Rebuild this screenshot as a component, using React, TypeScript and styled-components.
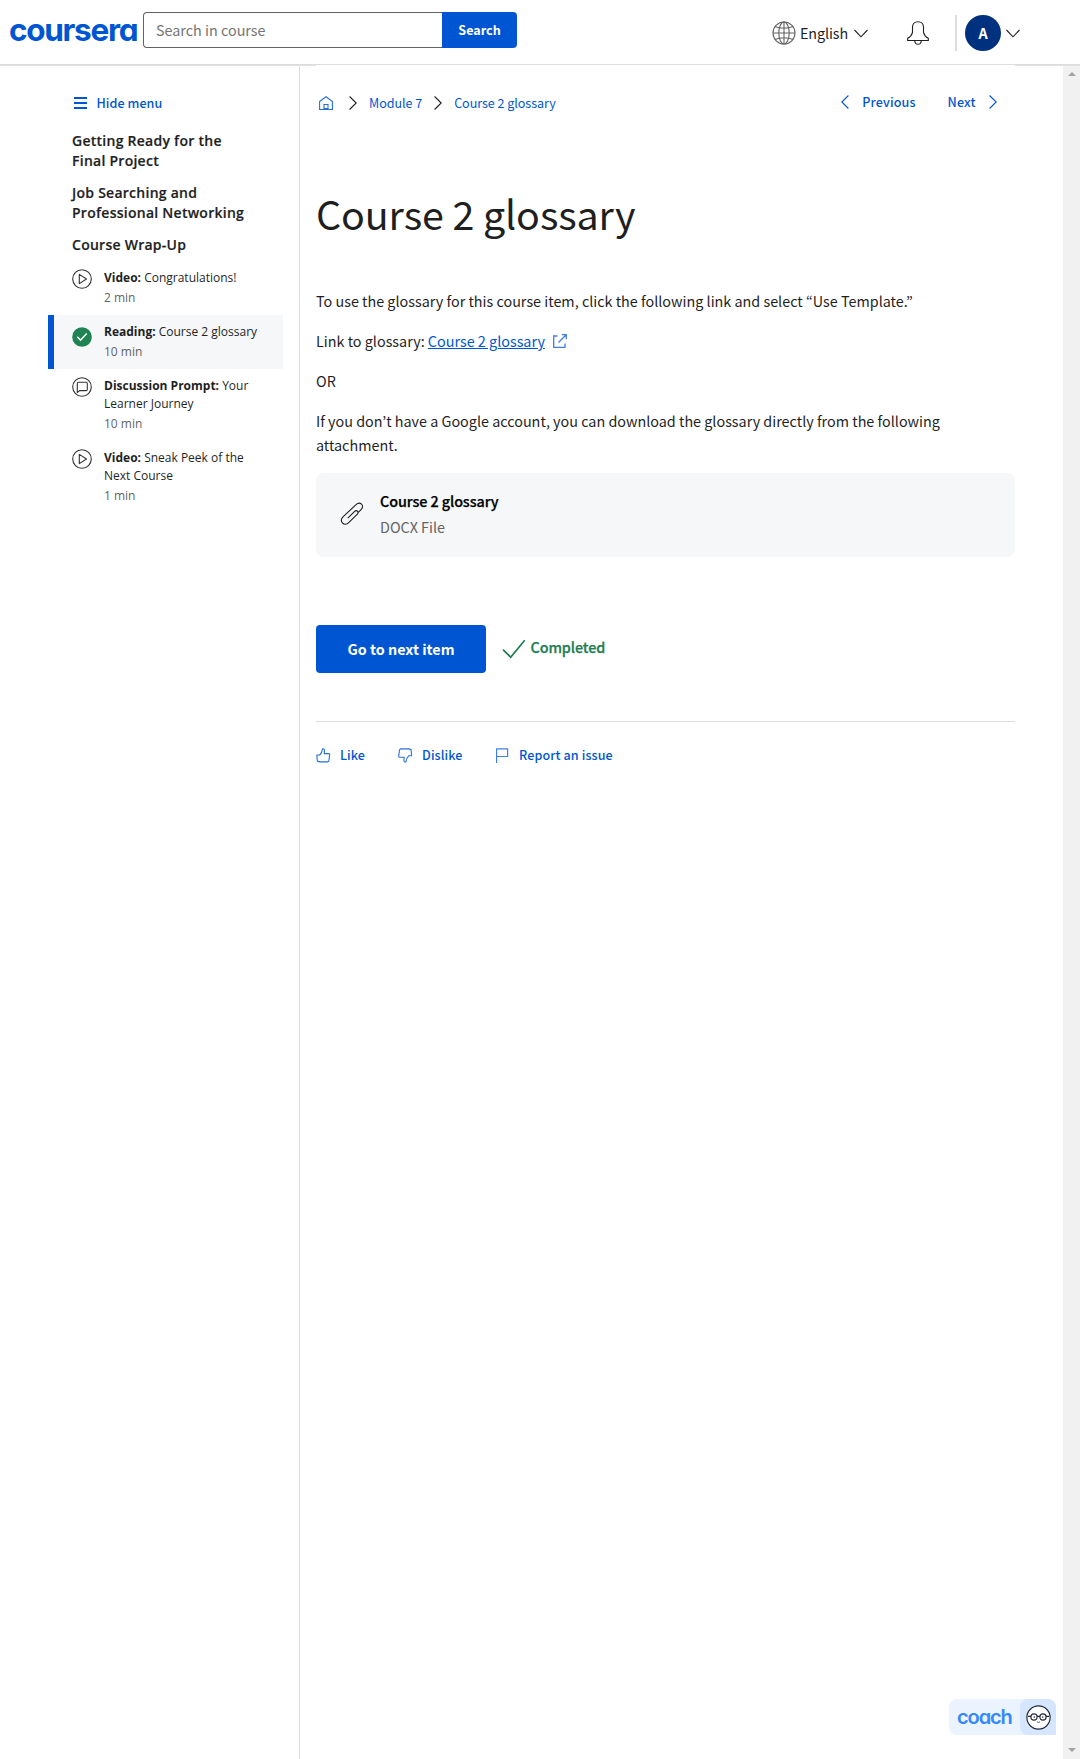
import React from 'react';
import styled, { createGlobalStyle, css } from 'styled-components';

const blue = '#0056d2';
const ink = '#1f1f1f';
const grey = '#636363';
const sourceFont = '"Noto Sans CJK KR", "Noto Sans", sans-serif';
const openFont = '"Open Sans", "Noto Sans", sans-serif';

const GlobalStyle = createGlobalStyle`
  * { box-sizing: border-box; }
  body { margin: 0; background: #fff; color: ${ink}; font-family: ${sourceFont}; }
  a { color: inherit; text-decoration: none; }
  button { font: inherit; color: inherit; border: 0; padding: 0; background: none; cursor: pointer; }
  h1, h2, p, ul, ol { margin: 0; padding: 0; list-style: none; }
  svg { display: block; flex: none; fill: none; stroke: currentColor; }
`;

const Page = styled.div`
  display: flex;
  flex-direction: column;
  width: 1080px;
  height: 1759px;
  overflow: hidden;
`;

/* ---------- header ---------- */

const Header = styled.header`
  display: flex;
  flex: none;
  height: 65px;
  border-bottom: 1px solid #ddd;
  padding-left: 9px;
`;

const Logo = styled.a`
  width: 134px;
  height: 36px;
  margin-top: 12px;
  font: 700 31.5px/36px Inter, sans-serif;
  font-feature-settings: 'cv11';
  letter-spacing: -1.3px;
  color: ${blue};
`;

const SearchForm = styled.div`
  display: flex;
  width: 374px;
  height: 36px;
  margin-top: 12px;
`;

const SearchInput = styled.input`
  flex: 1;
  min-width: 0;
  border: 1px solid ${grey};
  border-right: 0;
  border-radius: 4px 0 0 4px;
  padding: 0 12px 2px;
  outline: 0;
  font: 400 14.37px ${sourceFont};
  color: ${ink};
  &::placeholder { color: #757575; opacity: 1; }
`;

const SearchButton = styled.button`
  width: 75px;
  border-radius: 0 4px 4px 0;
  background: ${blue};
  color: #fff;
  font-size: 12.57px;
  font-weight: 700;
  line-height: 36px;
`;

const HeaderTools = styled.div`
  display: flex;
  align-items: center;
  height: 36px;
  margin: 15px 60px 0 auto;
`;

const Language = styled.button`
  display: flex;
  align-items: center;
  gap: 4px;
  margin-right: 39px;
  font-size: 14.37px;
  line-height: 24px;
`;

const LanguageName = styled.span`
  width: 50px;
  letter-spacing: -0.1px;
  text-align: left;
`;

const ToolDivider = styled.span`
  width: 2px;
  height: 36px;
  margin: 0 8px 0 26px;
  background: #ddd;
`;

const Avatar = styled.span`
  width: 36px;
  height: 36px;
  margin-right: 5px;
  border-radius: 50%;
  background: #00317f;
  color: #fff;
  font-size: 14.37px;
  font-weight: 700;
  line-height: 36px;
  text-align: center;
`;

const HeaderRule = styled.div`
  display: flex;
  flex: none;
  justify-content: space-between;
  height: 1px;
`;

const RulePart = styled.span<{ $width: number }>`
  width: ${p => p.$width}px;
  background: #e1e1e1;
`;

/* ---------- body ---------- */

const Body = styled.div`
  display: flex;
  flex: 1;
  min-height: 0;
`;

const Sidebar = styled.nav`
  flex: none;
  width: 300px;
  border-right: 1px solid #ddd;
  padding: 27px 16px 0 48px;
`;

const HideMenu = styled.button`
  display: flex;
  align-items: center;
  gap: 10px;
  height: 20px;
  margin: 0 0 18px 25.5px;
  color: ${blue};
  font-size: 12.57px;
  font-weight: 500;
  letter-spacing: 0.05px;
  line-height: 20px;
`;

const ModuleTitle = styled.h2`
  max-width: 180px;
  margin: 0 0 12px 24px;
  font: 600 14px/20px ${openFont};
  letter-spacing: 0.26px;
  -webkit-text-stroke: 0.2px currentColor;
`;

const ItemList = styled.ul`
  margin-top: -6px;
`;

const Item = styled.li<{ $active?: boolean }>`
  display: flex;
  gap: 12px;
  padding: 8px 16px 8px 24px;
  font: 400 12px/18px ${openFont};
  ${p => p.$active && css`
    padding-left: 18px;
    border-left: 6px solid ${blue};
    background: #f5f7f8;
  `}
`;

const ItemIcon = styled.span<{ $drop?: number }>`
  padding-top: ${p => p.$drop ?? 0}px;
  color: #333;
`;

const ItemTime = styled.div`
  height: 20px;
  line-height: 22px;
  color: ${grey};
`;

const Main = styled.main`
  flex: none;
  width: 699px;
  margin-left: 16px;
`;

const TopNav = styled.div`
  display: flex;
  align-items: center;
  height: 20px;
  margin-top: 27px;
  color: ${blue};
  font-size: 12.57px;
  line-height: 20px;
`;

const Crumbs = styled.div`
  display: flex;
  align-items: center;
  padding-left: 3px;
  letter-spacing: -0.05px;
`;

const Separator = styled.span<{ $before: number }>`
  margin: 0 12px 0 ${p => p.$before}px;
  color: ${ink};
`;

const Pager = styled.div`
  display: flex;
  align-items: center;
  margin: -2px 18.5px 0 auto;
  font-weight: 500;
  letter-spacing: 0.12px;
`;

const PagerLink = styled.a<{ $start?: number }>`
  display: flex;
  align-items: center;
  gap: 13px;
  margin-left: ${p => p.$start ?? 0}px;
`;

const Title = styled.h1`
  margin-top: 76px;
  font-size: 39.4px;
  font-weight: 400;
  letter-spacing: -0.1px;
  line-height: 48px;
`;

const Prose = styled.div`
  display: grid;
  gap: 16px;
  margin-top: 52px;
  font-size: 14.37px;
  line-height: 24px;
`;

const GlossaryLine = styled.p`
  display: flex;
  align-items: center;
  white-space: pre;
`;

const GlossaryLink = styled.a`
  margin-right: 8.5px;
  color: ${blue};
  text-decoration: underline;
`;

const Attachment = styled.a`
  display: flex;
  align-items: center;
  height: 84px;
  margin-top: 16px;
  border-radius: 8px;
  padding: 0 24px 2px;
  background: #f5f7f8;
  font-size: 14.37px;
  line-height: 26px;
`;

const AttachmentText = styled.div`
  margin-left: 16px;
  color: ${grey};
`;

const AttachmentName = styled.div`
  color: #000;
  font-weight: 500;
  letter-spacing: -0.08px;
  -webkit-text-stroke: 0.25px currentColor;
`;

const Actions = styled.div`
  display: flex;
  align-items: center;
  margin-top: 68px;
  font-size: 14.37px;
`;

const NextButton = styled.button`
  width: 170px;
  height: 48px;
  margin-right: 16px;
  border-radius: 4px;
  padding-bottom: 2px;
  background: ${blue};
  color: #fff;
  font-weight: 700;
`;

const Completed = styled.span`
  display: flex;
  align-items: center;
  gap: 4.5px;
  color: #1d7c50;
  font-weight: 500;
  line-height: 24px;
  -webkit-text-stroke: 0.25px currentColor;
`;

const CompletedText = styled.span`
  margin-top: -5px;
  letter-spacing: -0.1px;
`;

const Feedback = styled.div`
  display: flex;
  margin-top: 48px;
  border-top: 1px solid #ddd;
  padding-top: 23px;
  color: ${blue};
  font-size: 12.57px;
  font-weight: 500;
  letter-spacing: 0.1px;
  line-height: 20px;
`;

const FeedbackButton = styled.button<{ $width: number }>`
  display: flex;
  align-items: center;
  gap: 9px;
  width: ${p => p.$width}px;
  letter-spacing: inherit;
  white-space: nowrap;
`;

/* ---------- scrollbar and coach ---------- */

const Scrollbar = styled.div`
  display: flex;
  flex-direction: column;
  align-items: center;
  justify-content: space-between;
  width: 17px;
  margin-left: auto;
  padding: 6px 0 7px;
  background: #f1f1f1;
`;

const Arrow = styled.span<{ $down?: boolean }>`
  border: 4px solid transparent;
  ${p => p.$down ? 'border-top-color: #a3a3a3; border-bottom: 0;' : 'border-bottom-color: #a3a3a3; border-top: 0;'}
`;

const Coach = styled.button`
  position: absolute;
  left: 949px;
  top: 1699px;
  display: flex;
  width: 107px;
  height: 36px;
  border-radius: 8px 8px 0 8px;
  background: #ebf3ff;
`;

const CoachName = styled.span`
  flex: 1;
  padding-left: 8px;
  text-align: left;
  font: 600 20px/36px Inter, sans-serif;
  font-feature-settings: 'cv11';
  letter-spacing: -1.1px;
  color: #3587fc;
`;

const CoachFace = styled.span`
  display: grid;
  place-items: center;
  width: 36px;
  height: 36px;
  border-radius: 8px 8px 0 8px;
  background: #d6e6ff;
`;

/* ---------- icons ---------- */

const DownIcon = () => (
  <svg width="14" height="9" viewBox="0 0 14 9" strokeWidth="1.1"><path d="M.5 1 7 7.8 13.5 1" /></svg>
);
const RightIcon = () => (
  <svg width="8" height="14" viewBox="0 0 8 14" strokeWidth="1.1"><path d="M.6.5 7.2 7 .6 13.5" /></svg>
);
const LeftIcon = () => (
  <svg width="8" height="14" viewBox="0 0 8 14" strokeWidth="1.1"><path d="M7.4.5.8 7l6.6 6.5" /></svg>
);
const GlobeIcon = () => (
  <svg width="24" height="24" viewBox="0 0 24 24" color="#636363" strokeWidth="1.1">
    <circle cx="12" cy="12" r="11" />
    <ellipse cx="12" cy="12" rx="5.2" ry="11" />
    <path d="M12 1v22M1 12h22M3 5.6c5 2.2 13 2.2 18 0M3 18.4c5-2.2 13-2.2 18 0" />
  </svg>
);
const BellIcon = () => (
  <svg width="22" height="24" viewBox="0 0 22 24" strokeWidth="1.1">
    <path d="M.7 19.5v-2.2c2.4-1.3 4.1-3.2 4.8-6V6.2C5.5 3 7.8.7 11 .7s5.5 2.3 5.5 5.5v5.1c.7 2.8 2.4 4.7 4.8 6v2.2zM7.7 19.7c.2 2.2 1.5 3.6 3.3 3.6s3.1-1.4 3.3-3.6" />
  </svg>
);
const MenuIcon = () => (
  <svg width="13" height="12" viewBox="0 0 13 12" strokeWidth="2"><path d="M0 1h13M0 6h13M0 11h13" /></svg>
);
const HomeIcon = () => (
  <svg width="14" height="14" viewBox="0 0 14 14" strokeWidth="1.1" opacity=".85">
    <path d="M.6 5.5 7 .8l6.4 4.7v8H.6zM5 13.5v-5h4v5M5 12.5h4" />
  </svg>
);
const PlayIcon = () => (
  <svg width="20" height="20" viewBox="0 0 20 20" strokeWidth="1.1">
    <circle cx="10" cy="10" r="9.3" />
    <path d="M7.3 5.4v9.2l7.2-4.6z" strokeLinejoin="round" />
  </svg>
);
const DoneIcon = () => (
  <svg width="20" height="20" viewBox="0 0 20 20">
    <circle cx="10" cy="10" r="9.8" fill="#1f8354" stroke="none" />
    <path d="M5.3 9.8l3.2 3.4 6.2-6.6" stroke="#fff" strokeWidth="1.5" />
  </svg>
);
const ChatIcon = () => (
  <svg width="20" height="20" viewBox="0 0 20 20" strokeWidth="1.1">
    <circle cx="10" cy="10" r="9.3" />
    <path d="M6.5 5.2h7.6q1.2 0 1.2 1.2v6q0 1.2-1.2 1.2H7.8L5.3 15.4V6.4q0-1.2 1.2-1.2z" />
  </svg>
);
const ExternalIcon = () => (
  <svg width="14" height="14" viewBox="0 0 14 14" strokeWidth="1.3" color={blue} opacity=".75">
    <path d="M4.5 2H.7v11.3H12V9.5M8.8.7h4.5v4.5M13.2.8 5.5 8.5" />
  </svg>
);
const ClipIcon = () => (
  <svg width="24" height="24" viewBox="0 0 24 24" strokeWidth="1.1" color={ink}>
    <path d="M18.6 10.1 21 7.7c1.9-1.9 2-4.1.5-5.5s-3.7-1.3-5.5.5L3.2 14.7c-2.1 2.1-2.2 4.8-.6 6.4s4.1 1.5 6.1-.5l8.4-8.3c1.1-1.1 1.2-2.3.4-3.1s-2-.7-3.1.4l-6.6 6.5" />
  </svg>
);
const CheckIcon = () => (
  <svg width="24" height="20" viewBox="0 0 24 20" strokeWidth="1.7"><path d="M1 10.6l7.7 7.6L22.7 1.2" /></svg>
);
const thumb = 'M3.7 7C5.2 5.6 6.2 3.7 6.5.9c1.3-.4 2.1.6 2 1.8L8.2 5.6h4.7q.9 0 .8.9l-.8 6q-.2 1.4-1.4 1.4H4.3Q2.4 13.9 1.3 13L.8 7z';
const LikeIcon = () => (
  <svg width="15" height="15" viewBox="0 0 15 15" strokeWidth="1.1" strokeLinejoin="round" opacity=".85"><path d={thumb} /></svg>
);
const DislikeIcon = () => (
  <svg width="15" height="15" viewBox="0 0 15 15" strokeWidth="1.1" strokeLinejoin="round" opacity=".85"><path d={thumb} transform="rotate(180 7.2 7.4)" /></svg>
);
const FlagIcon = () => (
  <svg width="15" height="15" viewBox="0 0 15 15" strokeWidth="1.2" opacity=".75"><path d="M1.6 15V.9h11v7.6h-11" /></svg>
);
const FaceIcon = () => (
  <svg width="25" height="25" viewBox="0 0 25 25" color="#222c3c" strokeWidth="1.2">
    <circle cx="12.5" cy="12.5" r="11.6" fill="#fff" />
    <circle cx="8" cy="12" r="3.1" />
    <circle cx="17" cy="12" r="3.1" />
    <path d="M2 11.3h3M20 11.3h3M11 11.3h3" />
    <path d="M11 16.8q1.5 1.3 3 0" strokeWidth=".8" />
    <circle cx="8.3" cy="12" r=".8" fill="currentColor" stroke="none" />
    <circle cx="16.7" cy="12" r=".8" fill="currentColor" stroke="none" />
  </svg>
);

const modules = ['Getting Ready for the Final Project', 'Job Searching and Professional Networking', 'Course Wrap-Up'];

const lessons = [
  { kind: 'Video', name: 'Congratulations!', time: '2 min', icon: <PlayIcon /> },
  { kind: 'Reading', name: 'Course 2 glossary', time: '10 min', icon: <DoneIcon />, active: true, drop: 4 },
  { kind: 'Discussion Prompt', name: 'Your Learner Journey', time: '10 min', icon: <ChatIcon /> },
  { kind: 'Video', name: 'Sneak Peek of the Next Course', time: '1 min', icon: <PlayIcon /> },
];

export default function App() {
  return (
    <Page>
      <GlobalStyle />
      <Header>
        <Logo href="#">coursera</Logo>
        <SearchForm>
          <SearchInput placeholder="Search in course" />
          <SearchButton>Search</SearchButton>
        </SearchForm>
        <HeaderTools>
          <Language>
            <GlobeIcon />
            <LanguageName>English</LanguageName>
            <DownIcon />
          </Language>
          <BellIcon />
          <ToolDivider />
          <Avatar>A</Avatar>
          <DownIcon />
        </HeaderTools>
      </Header>
      <HeaderRule>
        <RulePart $width={316} />
        <RulePart $width={65} />
      </HeaderRule>
      <Body>
        <Sidebar>
          <HideMenu><MenuIcon />Hide menu</HideMenu>
          {modules.map(m => <ModuleTitle key={m}>{m}</ModuleTitle>)}
          <ItemList>
            {lessons.map(l => (
              <Item key={l.name} $active={l.active}>
                <ItemIcon $drop={l.drop}>{l.icon}</ItemIcon>
                <div>
                  <div><b>{l.kind}:</b> {l.name}</div>
                  <ItemTime>{l.time}</ItemTime>
                </div>
              </Item>
            ))}
          </ItemList>
        </Sidebar>
        <Main>
          <TopNav>
            <Crumbs>
              <HomeIcon />
              <Separator $before={16}><RightIcon /></Separator>
              <a href="#">Module 7</a>
              <Separator $before={12}><RightIcon /></Separator>
              <a href="#">Course 2 glossary</a>
            </Crumbs>
            <Pager>
              <PagerLink href="#"><LeftIcon />Previous</PagerLink>
              <PagerLink href="#" $start={32}>Next<RightIcon /></PagerLink>
            </Pager>
          </TopNav>
          <Title>Course 2 glossary</Title>
          <Prose>
            <p>To use the glossary for this course item, click the following link and select “Use Template.”</p>
            <GlossaryLine>
              Link to glossary: <GlossaryLink href="#">Course 2 glossary</GlossaryLink>
              <ExternalIcon />
            </GlossaryLine>
            <p>OR</p>
            <p>If you don’t have a Google account, you can download the glossary directly from the following attachment.</p>
          </Prose>
          <Attachment href="#">
            <ClipIcon />
            <AttachmentText>
              <AttachmentName>Course 2 glossary</AttachmentName>
              DOCX File
            </AttachmentText>
          </Attachment>
          <Actions>
            <NextButton>Go to next item</NextButton>
            <Completed><CheckIcon /><CompletedText>Completed</CompletedText></Completed>
          </Actions>
          <Feedback>
            <FeedbackButton $width={82}><LikeIcon />Like</FeedbackButton>
            <FeedbackButton $width={97}><DislikeIcon />Dislike</FeedbackButton>
            <FeedbackButton $width={130}><FlagIcon />Report an issue</FeedbackButton>
          </Feedback>
        </Main>
        <Scrollbar><Arrow /><Arrow $down /></Scrollbar>
      </Body>
      <Coach>
        <CoachName>coach</CoachName>
        <CoachFace><FaceIcon /></CoachFace>
      </Coach>
    </Page>
  );
}
